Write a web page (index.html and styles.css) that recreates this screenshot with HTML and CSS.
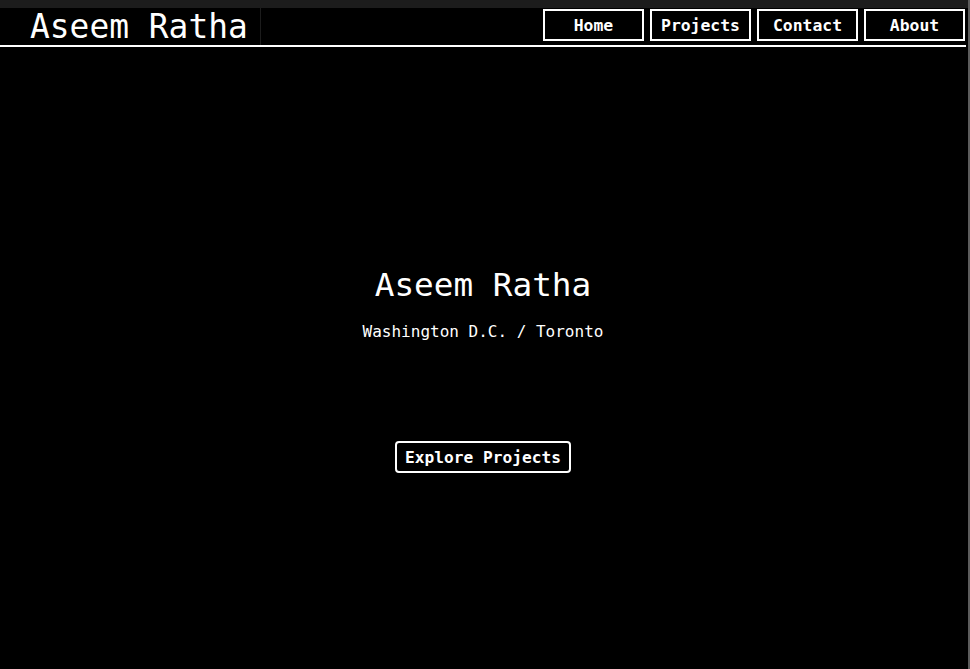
FILE: index.html
```html
<!DOCTYPE html>
<html lang="en">
<head>
<meta charset="utf-8">
<title>Aseem Ratha</title>
<link rel="stylesheet" href="styles.css">
</head>
<body>
<div class="frame">
  <div class="page">
    <div class="topstrip"></div>
    <header class="header">
      <div class="brand">Aseem Ratha</div>
      <nav class="nav">
        <a class="nav-btn" href="#">Home</a>
        <a class="nav-btn" href="#">Projects</a>
        <a class="nav-btn" href="#">Contact</a>
        <a class="nav-btn" href="#">About</a>
      </nav>
    </header>
    <main class="hero">
      <h1 class="hero-title">Aseem Ratha</h1>
      <p class="hero-sub">Washington D.C. / Toronto</p>
      <a class="cta" href="#">Explore Projects</a>
    </main>
  </div>
  <div class="edge"></div>
</div>
</body>
</html>
```
FILE: styles.css
```css
html, body {
  margin: 0;
  padding: 0;
  height: 100%;
  background: #000;
}
body {
  font-family: "DejaVu Sans Mono", "Liberation Mono", monospace;
  color: #fff;
  overflow: hidden;
}
.frame {
  display: flex;
  height: 669px;
}
.page {
  flex: 1;
  display: flex;
  flex-direction: column;
  padding-right: 2px;
  background: #000;
}
.edge {
  width: 2px;
  background: #5c5c5c;
}
.topstrip {
  height: 8px;
  background: #1c1c1c;
  margin-right: -2px;
}
.header {
  display: flex;
  align-items: flex-start;
  height: 37px;
  border-bottom: 2px solid #fff;
}
.brand {
  width: 230px;
  height: 37px;
  padding-left: 30px;
  border-right: 1px solid #1c1c1c;
  font-size: 32.9px;
  line-height: 37px;
  white-space: nowrap;
}
.nav {
  margin-left: auto;
  display: flex;
  gap: 6px;
  padding-top: 1px;
  padding-right: 1px;
}
.nav-btn {
  box-sizing: border-box;
  width: 101px;
  height: 32px;
  border: 2px solid #fff;
  display: flex;
  align-items: center;
  justify-content: center;
  color: #fff;
  text-decoration: none;
  font-weight: bold;
  font-size: 16.4px;
}
.hero {
  display: flex;
  flex-direction: column;
  align-items: center;
  padding-top: 218px;
}
.hero-title {
  margin: 0;
  font-weight: normal;
  font-size: 32.7px;
  line-height: 40px;
}
.hero-sub {
  margin: 17px 0 0;
  font-size: 16px;
  line-height: 20px;
}
.cta {
  margin-top: 99px;
  box-sizing: border-box;
  height: 32px;
  padding: 0 8px;
  border: 2px solid #fff;
  border-radius: 4px;
  display: flex;
  align-items: center;
  color: #fff;
  text-decoration: none;
  font-weight: bold;
  font-size: 16.2px;
}
```
